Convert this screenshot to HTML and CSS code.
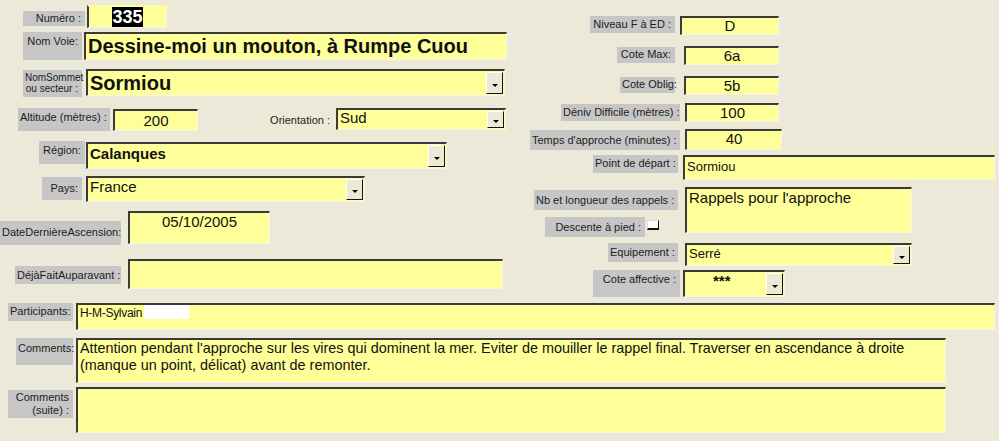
FILE: index.html
```html
<!DOCTYPE html>
<html>
<head>
    <title>Fiche Voie</title>
    <link rel="stylesheet" href="styles.css">
</head>
<body>
<div class="form">
    <div class="top">
        <div class="col-left">
            <div class="row r1">
                <div class="lbl l-num">Numéro :</div>
                <div class="fld f-num"><span class="sel">335</span></div>
            </div>
            <div class="row r2">
                <div class="lbl l-voie">Nom Voie:</div>
                <div class="fld f-voie">Dessine-moi un mouton, à Rumpe Cuou</div>
            </div>
            <div class="row r3">
                <div class="lbl l-som">NomSommet<br>ou secteur :</div>
                <div class="fld combo f-som"><span class="val">Sormiou</span><span class="drop"><i></i></span></div>
            </div>
            <div class="row r4">
                <div class="lbl l-alt">Altitude (mètres) :</div>
                <div class="fld f-alt">200</div>
                <div class="plain l-ori">Orientation :</div>
                <div class="fld combo f-ori"><span class="val">Sud</span><span class="drop"><i></i></span></div>
            </div>
            <div class="row r5">
                <div class="lbl l-reg">Région:</div>
                <div class="fld combo f-reg"><span class="val">Calanques</span><span class="drop"><i></i></span></div>
            </div>
            <div class="row r6">
                <div class="lbl l-pays">Pays:</div>
                <div class="fld combo f-pays"><span class="val">France</span><span class="drop"><i></i></span></div>
            </div>
            <div class="row r7">
                <div class="lbl l-date">DateDernièreAscension:</div>
                <div class="fld f-date">05/10/2005</div>
            </div>
            <div class="row r8">
                <div class="lbl l-deja">DéjàFaitAuparavant :</div>
                <div class="fld f-deja"></div>
            </div>
        </div>
        <div class="col-right">
            <div class="row q1">
                <div class="lbl l-niv">Niveau F à ED :</div>
                <div class="fld num f-niv">D</div>
            </div>
            <div class="row q2">
                <div class="lbl l-cmax">Cote Max:</div>
                <div class="fld num f-cmax">6a</div>
            </div>
            <div class="row q3">
                <div class="lbl l-cobl">Cote Oblig:</div>
                <div class="fld num f-cobl">5b</div>
            </div>
            <div class="row q4">
                <div class="lbl l-den">Déniv Difficile (mètres) :</div>
                <div class="fld num f-den">100</div>
            </div>
            <div class="row q5">
                <div class="lbl l-tps">Temps d'approche (minutes) :</div>
                <div class="fld num f-tps">40</div>
            </div>
            <div class="row q6">
                <div class="lbl l-dep">Point de départ :</div>
                <div class="fld f-dep">Sormiou</div>
            </div>
            <div class="row q7">
                <div class="stack">
                    <div class="lbl l-rap">Nb et longueur des rappels :</div>
                    <div class="desc">
                        <div class="lbl l-desc">Descente à pied :</div>
                        <div class="chk"></div>
                    </div>
                </div>
                <div class="fld f-rap">Rappels pour l'approche</div>
            </div>
            <div class="row q8">
                <div class="lbl l-equ">Equipement :</div>
                <div class="fld combo f-equ"><span class="val">Serré</span><span class="drop"><i></i></span></div>
            </div>
            <div class="row q9">
                <div class="lbl l-aff">Cote affective :</div>
                <div class="fld combo f-aff"><span class="val">***</span><span class="drop"><i></i></span></div>
            </div>
        </div>
    </div>
    <div class="row b1">
        <div class="lbl l-part">Participants:</div>
        <div class="fld f-part">H-M-Sylvain<span class="blank"></span></div>
    </div>
    <div class="row b2">
        <div class="lbl l-com">Comments:</div>
        <div class="fld f-com">Attention pendant l'approche sur les vires qui dominent la mer. Eviter de mouiller le rappel final. Traverser en ascendance à droite (manque un point, délicat) avant de remonter.</div>
    </div>
    <div class="row b3">
        <div class="lbl l-suite">Comments<br>(suite) :</div>
        <div class="fld f-suite"></div>
    </div>
</div>
</body>
</html>
```

FILE: styles.css
```css
body {
    margin: 0;
    background-color: #ece9d8;
    font-family: "Liberation Sans", Arial, sans-serif;
    color: #111;
}
.form {
    width: 999px;
    height: 441px;
    overflow: hidden;
}
.top {
    display: flex;
    height: 297px;
}
.col-left {
    width: 530px;
}
.col-right {
    flex: 1;
}
.row {
    display: flex;
    align-items: flex-start;
}

/* labels */
.lbl {
    background-color: #c6c6c6;
    color: #1c1c1c;
    font-size: 11px;
    line-height: 13px;
    text-align: right;
    padding: 3px 4px 0 2px;
    box-sizing: border-box;
    white-space: nowrap;
}
.plain {
    font-size: 11px;
    line-height: 13px;
    text-align: right;
    color: #1c1c1c;
    box-sizing: border-box;
}

/* fields */
.fld {
    background-color: #ffff99;
    border-style: solid;
    border-width: 2px 1px 1px 2px;
    border-color: #3a3a3a #f4f4ee #f4f4ee #3a3a3a;
    box-sizing: border-box;
    font-size: 14px;
    padding: 0 2px;
    overflow: hidden;
    white-space: nowrap;
}
.num {
    text-align: center;
    font-size: 15px;
    line-height: 16px;
}
.combo {
    display: flex;
    align-items: stretch;
    padding-right: 1px;
}
.combo .val {
    flex: 1;
}
.drop {
    width: 15px;
    margin: 1px 0 1px 0;
    background-color: #ece9d8;
    border-style: solid;
    border-width: 1px;
    border-color: #fff #111 #111 #fff;
    display: flex;
    align-items: center;
    justify-content: center;
}
.drop i {
    display: block;
    width: 0;
    height: 0;
    margin-top: 4px;
    border-left: 3px solid transparent;
    border-right: 3px solid transparent;
    border-top: 3px solid #000;
}

/* left column */
.r1 { margin-top: 5px; }
.l-num { margin: 6px 0 0 23px; width: 62px; height: 15px; padding-top: 1px; }
.f-num {
    margin-left: 2px; width: 80px; height: 23px;
    border-top-color: #ffff99;
    text-align: center; font-weight: bold; font-size: 18px; line-height: 20px;
}
.sel { background-color: #000; color: #fff; }

.r2 { margin-top: 4px; }
.l-voie { margin-left: 23px; width: 59px; height: 28px; }
.f-voie { margin-left: 2px; width: 423px; height: 28px; font-weight: bold; font-size: 20px; line-height: 24px; }

.r3 { margin-top: 9px; }
.l-som { margin: 1px 0 0 23px; width: 59px; height: 27px; font-size: 10px; line-height: 11px; padding-top: 2px; }
.f-som { margin-left: 4px; width: 419px; height: 27px; font-weight: bold; font-size: 20px; line-height: 24px; }

.r4 { margin-top: 11px; }
.l-alt { margin-left: 18px; width: 92px; height: 23px; }
.f-alt { margin: 1px 0 0 3px; width: 85px; height: 22px; text-align: center; font-size: 15px; line-height: 19px; }
.l-ori { margin: 6px 0 0 32px; width: 100px; padding-right: 0; }
.f-ori { margin-left: 6px; width: 170px; height: 22px; font-size: 15px; line-height: 16px; }

.r5 { margin-top: 10px; }
.l-reg { margin-left: 39px; width: 46px; height: 23px; }
.f-reg { margin: 1px 0 0 1px; width: 361px; height: 27px; font-weight: bold; font-size: 15px; line-height: 20px; }

.r6 { margin-top: 7px; }
.l-pays { margin: 1px 0 0 42px; width: 40px; height: 23px; padding-top: 5px; }
.f-pays { margin-left: 4px; width: 279px; height: 26px; font-size: 15px; line-height: 17px; }

.r7 { margin-top: 9px; }
.l-date { margin-top: 10px; width: 121px; height: 24px; padding-top: 5px; }
.f-date { margin-left: 7px; width: 142px; height: 33px; text-align: center; font-size: 15px; line-height: 18px; }

.r8 { margin-top: 14px; }
.l-deja { margin: 7px 0 0 15px; width: 106px; height: 18px; padding-top: 3px; }
.f-deja { margin-left: 7px; width: 375px; height: 30px; }

/* right column */
.q1 { margin-top: 16px; }
.l-niv { margin-left: 60px; width: 85px; height: 17px; padding-top: 2px; }
.f-niv { margin-left: 5px; width: 99px; height: 19px; }

.q2 { margin-top: 11px; }
.l-cmax { margin: 1px 0 0 87px; width: 58px; height: 16px; padding-top: 1px; }
.f-cmax { margin-left: 9px; width: 95px; height: 19px; }

.q3 { margin-top: 11px; }
.l-cobl { margin: 1px 0 0 90px; width: 55px; height: 16px; padding-top: 1px; }
.f-cobl { margin-left: 9px; width: 95px; height: 19px; }

.q4 { margin-top: 8px; }
.l-den { margin: 1px 0 0 31px; width: 119px; height: 17px; padding-top: 2px; }
.f-den { margin-left: 5px; width: 94px; height: 19px; }

.q5 { margin-top: 7px; }
.l-tps { margin-top: 1px; width: 150px; height: 20px; padding-top: 4px; }
.f-tps { margin-left: 5px; width: 97px; height: 21px; }

.q6 { margin-top: 5px; }
.l-dep { margin-left: 63px; width: 85px; height: 18px; padding-top: 2px; }
.f-dep { margin-left: 5px; width: 312px; height: 25px; font-size: 13px; line-height: 19px; }

.q7 { margin-top: 7px; }
.stack { width: 148px; }
.l-rap { margin: 3px 0 0 4px; width: 144px; height: 20px; padding-top: 4px; }
.desc { display: flex; align-items: flex-start; margin: 7px 0 0 15px; }
.l-desc { width: 100px; height: 20px; padding-top: 4px; }
.chk {
    margin: 3px 0 0 2px;
    width: 12px;
    height: 10px;
    background-color: #fff;
    box-sizing: border-box;
    border-style: solid;
    border-width: 1px 1px 2px 1px;
    border-color: #ddd #111 #111 #ddd;
}
.f-rap { margin-left: 7px; width: 227px; height: 46px; font-size: 15px; line-height: 17px; white-space: normal; }

.q8 { margin-top: 6px; }
.l-equ { margin-left: 78px; width: 70px; height: 19px; padding-top: 3px; }
.f-equ { margin-left: 7px; width: 227px; height: 23px; font-size: 13px; line-height: 18px; }

.q9 { margin-top: 4px; }
.l-aff { margin-left: 63px; width: 87px; height: 27px; }
.f-aff { margin-left: 3px; width: 102px; height: 27px; font-weight: bold; font-size: 15px; line-height: 18px; }
.f-aff .val { padding-left: 26px; }

/* bottom rows */
.b1 { margin-top: 6px; }
.l-part { margin-left: 8px; width: 65px; height: 18px; padding-top: 2px; }
.f-part { margin-left: 3px; width: 919px; height: 27px; font-size: 12px; line-height: 17px; letter-spacing: -0.3px; }
.blank {
    display: inline-block;
    width: 45px;
    height: 14px;
    margin-left: 2px;
    vertical-align: -2px;
    background-color: #fff;
}

.b2 { margin-top: 8px; }
.l-com { margin-left: 16px; width: 57px; height: 27px; padding-top: 4px; }
.f-com { margin-left: 3px; width: 870px; height: 45px; font-size: 14.4px; line-height: 17px; white-space: normal; }

.b3 { margin-top: 4px; }
.l-suite { margin: 3px 0 0 8px; width: 65px; height: 28px; padding-top: 1px; }
.f-suite { margin-left: 3px; width: 870px; height: 46px; }
```
